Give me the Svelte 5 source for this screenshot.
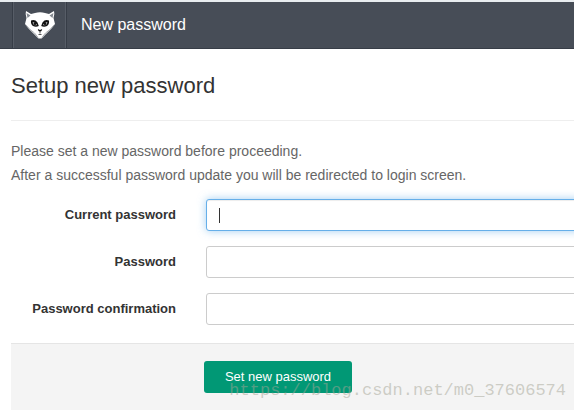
<script lang="ts">
	type Field = {
		id: string;
		label: string;
		active?: boolean;
	};

	const fields: Field[] = [
		{ id: 'current_password', label: 'Current password', active: true },
		{ id: 'password', label: 'Password' },
		{ id: 'password_confirmation', label: 'Password confirmation' }
	];

	let values = $state<Record<string, string>>({
		current_password: '',
		password: '',
		password_confirmation: ''
	});
</script>

<div class="page">
	<header class="navbar">
		<a class="logo" href="/" aria-label="Dashboard">
			<svg viewBox="0 0 32 30" width="32" height="30" aria-hidden="true">
				<!-- head and ears -->
				<path
					d="M2 1 L7 4 L11 3 Q16 1.5 21 3 L25 4 L30 1 Q31 4 29.5 8 L31 14 L27 19 L22 24 L17.5 28.5 L14.5 28.5 L10 24 L5 19 L1 14 L2.5 8 Q1 4 2 1Z"
					fill="#fff"
				/>
				<path d="M2.5 3 L6.5 5.5 L3.5 8Z M29.5 3 L25.5 5.5 L28.5 8Z" fill="#858a91" />
				<path
					d="M1.5 14.5 L6 19.5 L10.5 23 L14 27.5 M30.5 14.5 L26 19.5 L21.5 23 L18 27.5"
					fill="none"
					stroke="#a9acb0"
					stroke-width="1"
				/>
				<!-- eyes -->
				<path
					d="M7 10.5 Q11 9 13.5 12.5 L14.8 16 Q12 17.5 9 16 Q6.5 14 7 10.5Z M25 10.5 Q21 9 18.5 12.5 L17.2 16 Q20 17.5 23 16 Q25.5 14 25 10.5Z"
					fill="#111"
				/>
				<path
					d="M8.5 12.5 Q11.5 11.5 13 15 Q9.5 16 8.5 12.5Z M23.5 12.5 Q20.5 11.5 19 15 Q22.5 16 23.5 12.5Z"
					fill="#ddd"
				/>
				<circle cx="11" cy="13.7" r="1.4" fill="#111" />
				<circle cx="21" cy="13.7" r="1.4" fill="#111" />
				<!-- nose and mouth -->
				<path d="M13.8 19 L16 20 L18.2 19 L17.5 21 L16 21.8 L14.5 21Z" fill="#111" />
				<path d="M16 21.5 V23.5 M14.5 24.5 H17.5" fill="none" stroke="#555" />
			</svg>
		</a>
		<span class="navbar-title">New password</span>
	</header>

	<main class="content">
		<h1>Setup new password</h1>
		<hr />
		<form onsubmit={(event) => event.preventDefault()}>
			<p>
				Please set a new password before proceeding.<br />
				After a successful password update you will be redirected to login screen.
			</p>

			{#each fields as field (field.id)}
				<div class="form-group">
					<label for={field.id}>{field.label}</label>
					<div class="control">
						<input
							id={field.id}
							type="password"
							class:active={field.active}
							bind:value={values[field.id]}
						/>
						{#if field.active && !values[field.id]}
							<span class="caret"></span>
						{/if}
					</div>
				</div>
			{/each}

			<div class="form-actions">
				<button type="submit">Set new password</button>
			</div>
		</form>
	</main>

	<div class="watermark">https://blog.csdn.net/m0_37606574</div>
</div>

<style>
	:global(body) {
		background: #fff;
		overflow: hidden;
	}
	.page {
		position: relative;
		min-height: 100vh;
		overflow: hidden;
		border-top: 2px solid #e9edf0;
		box-sizing: border-box;
		font-family: Arial, 'Liberation Sans', sans-serif;
		color: #333;
	}
	.navbar {
		display: flex;
		height: 46px;
		padding-left: 12px;
		background: #474d57;
		border-bottom: 1px solid #373d47;
	}
	.logo {
		display: flex;
		align-items: center;
		justify-content: center;
		width: 53px;
		border-left: 1px solid #373d47;
		border-right: 1px solid #373d47;
		box-shadow: inset 1px 0 #575d67, inset -1px 0 #575d67;
	}
	.navbar-title {
		padding-left: 14px;
		font-size: 16px;
		line-height: 45px;
		color: #fff;
	}
	.content {
		padding-left: 11px;
	}
	h1 {
		margin: 0;
		padding: 22px 0 20px;
		font-size: 22px;
		line-height: 29px;
		font-weight: 400;
	}
	hr {
		margin: 0 0 18px;
		border: 0;
		border-top: 1px solid #eee;
	}
	p {
		margin: 0 0 12px;
		font-size: 14px;
		line-height: 24px;
		color: #666;
		white-space: nowrap;
	}
	.form-group {
		display: grid;
		grid-template-columns: 165px 1fr;
		column-gap: 30px;
		align-items: center;
		margin: 0 -12px 15px 0;
	}
	label {
		font-size: 13px;
		line-height: 20px;
		font-weight: 700;
		text-align: right;
	}
	.control {
		position: relative;
	}
	input {
		display: block;
		width: 100%;
		height: 32px;
		box-sizing: border-box;
		padding: 6px 12px;
		border: 1px solid #ccc;
		border-radius: 3px;
		outline: none;
		background: #fff;
		font: inherit;
		font-size: 13px;
		color: #555;
	}
	input.active,
	input:focus {
		border-color: #66afe9;
		box-shadow: inset 0 1px 1px rgba(0, 0, 0, 0.075), 0 0 8px rgba(102, 175, 233, 0.6);
		caret-color: transparent;
	}
	.caret {
		position: absolute;
		top: 9px;
		left: 13px;
		width: 1px;
		height: 15px;
		background: #333;
	}
	.form-actions {
		margin-top: 18px;
		padding: 17px 20px 17px 193px;
		border-top: 1px solid #e5e5e5;
		background: #f4f4f4;
	}
	button {
		display: block;
		min-width: 148px;
		height: 32px;
		padding: 0 20px;
		border: 0;
		border-radius: 3px;
		background: #019875;
		font-family: inherit;
		font-size: 13px;
		line-height: 32px;
		color: #fff;
	}
	.watermark {
		position: absolute;
		right: 8px;
		bottom: 9px;
		font-family: 'Liberation Mono', monospace;
		font-size: 17px;
		line-height: 20px;
		color: rgba(165, 165, 150, 0.5);
		pointer-events: none;
	}
</style>
